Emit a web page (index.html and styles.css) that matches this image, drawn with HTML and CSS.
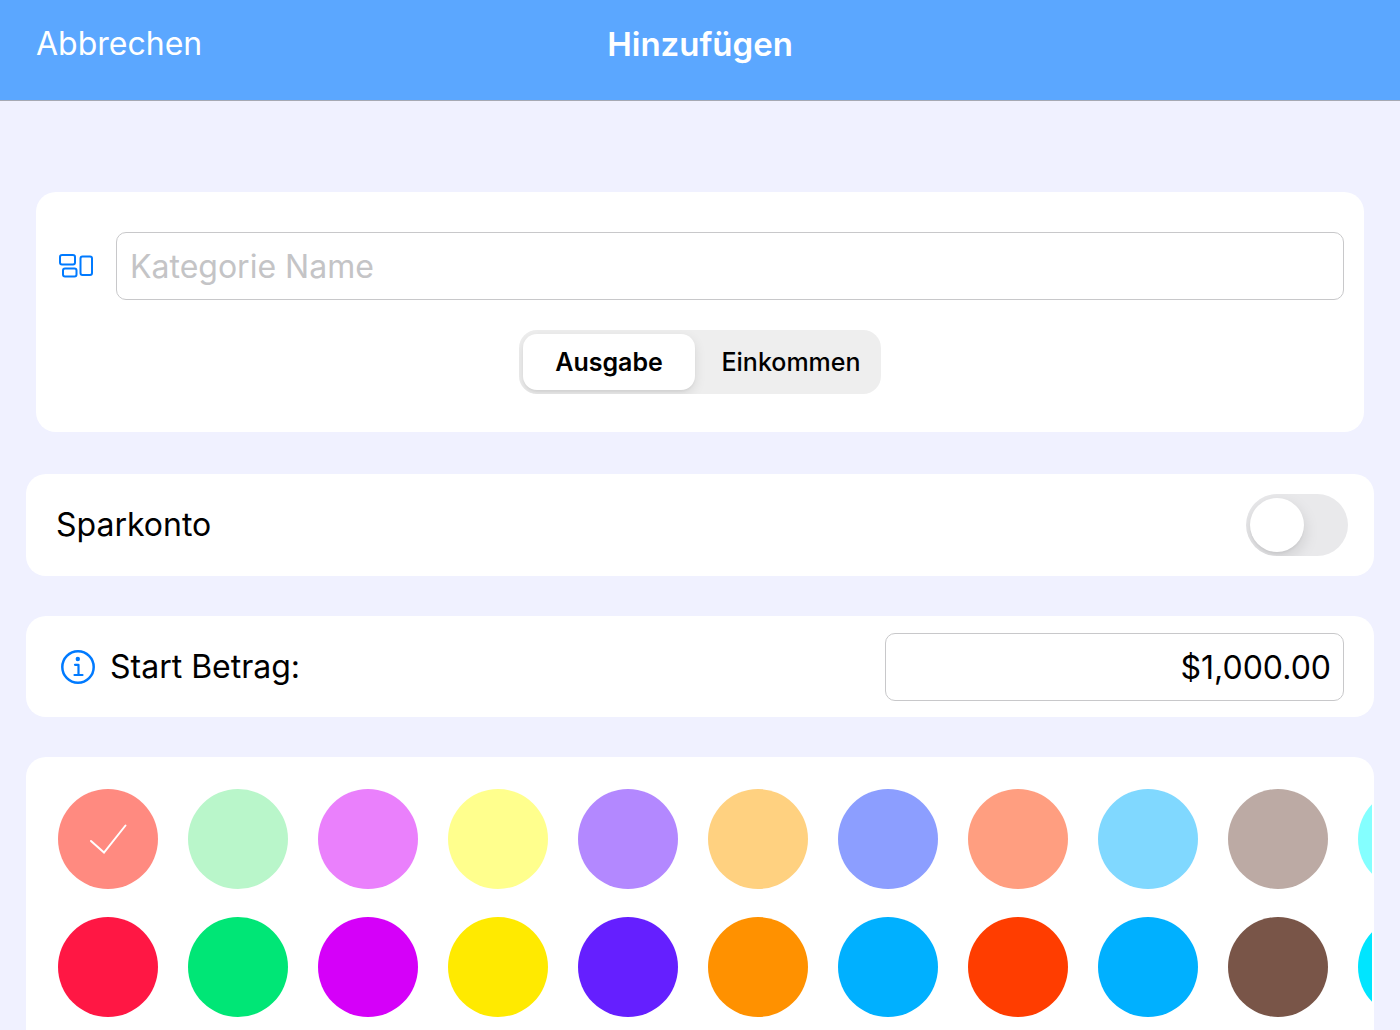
FILE: index.html
```html
<!DOCTYPE html>
<html lang="de">
<head>
<meta charset="utf-8">
<meta name="viewport" content="width=device-width, initial-scale=1">
<title>Hinzufügen</title>
<link rel="stylesheet" href="styles.css">
</head>
<body>
<header class="navbar">
  <button class="navbar-action" type="button">Abbrechen</button>
  <h1 class="navbar-title">Hinzufügen</h1>
</header>
<main class="form">
  <section class="card card-name">
    <div class="name-row">
      <label class="name-label" for="name" aria-label="Kategorie Name">
        <svg class="icon" width="36" height="36" viewBox="0 0 36 36" fill="none" stroke="#007aff" stroke-width="2">
          <rect x="2" y="7" width="15" height="9.500" rx="2"/>
          <rect x="5" y="20.500" width="13.500" height="8" rx="2"/>
          <rect x="22.500" y="8.500" width="11.500" height="18.500" rx="2"/>
        </svg>
      </label>
      <input class="field" id="name" type="text" placeholder="Kategorie Name">
    </div>
    <div class="segmented" role="radiogroup">
      <label class="segment"><input class="segment-input" type="radio" name="type" checked><span class="segment-text">Ausgabe</span></label>
      <label class="segment"><input class="segment-input" type="radio" name="type"><span class="segment-text">Einkommen</span></label>
    </div>
  </section>
  <section class="card card-savings">
    <label class="row-label" for="savings">Sparkonto</label>
    <input class="switch" id="savings" type="checkbox" role="switch">
  </section>
  <section class="card card-amount">
    <button class="info" type="button" aria-label="Info">
      <svg class="icon" width="36" height="36" viewBox="0 0 36 36" fill="none" stroke="#007aff">
        <circle cx="18" cy="18" r="15.700" stroke-width="2.500"/>
        <circle cx="17.800" cy="10" r="2.200" fill="#007aff" stroke="none"/>
        <path d="M15 15.800h3.500v10M14.500 26h8" stroke-width="2.200" stroke-linecap="round" stroke-linejoin="round"/>
      </svg>
    </button>
    <label class="row-label" for="amount">Start Betrag:</label>
    <input class="field field-amount" id="amount" type="text" inputmode="decimal" value="$1,000.00">
  </section>
  <section class="card card-colors">
    <div class="swatches" role="radiogroup" aria-label="Farbe">
      <label class="swatch" style="background:#ff8a80"><input class="swatch-input" type="radio" name="color" checked aria-label="#ff8a80"><svg class="check" width="40" height="32" viewBox="0 0 40 32" fill="none" stroke="#fff" stroke-width="2" stroke-linecap="round" stroke-linejoin="miter"><path d="M3 18L16 29.500L37.500 2.500"/></svg></label>
      <label class="swatch" style="background:#ff1744"><input class="swatch-input" type="radio" name="color" aria-label="#ff1744"></label>
      <label class="swatch" style="background:#b9f6ca"><input class="swatch-input" type="radio" name="color" aria-label="#b9f6ca"></label>
      <label class="swatch" style="background:#00e676"><input class="swatch-input" type="radio" name="color" aria-label="#00e676"></label>
      <label class="swatch" style="background:#ea80fc"><input class="swatch-input" type="radio" name="color" aria-label="#ea80fc"></label>
      <label class="swatch" style="background:#d500f9"><input class="swatch-input" type="radio" name="color" aria-label="#d500f9"></label>
      <label class="swatch" style="background:#ffff8d"><input class="swatch-input" type="radio" name="color" aria-label="#ffff8d"></label>
      <label class="swatch" style="background:#ffea00"><input class="swatch-input" type="radio" name="color" aria-label="#ffea00"></label>
      <label class="swatch" style="background:#b388ff"><input class="swatch-input" type="radio" name="color" aria-label="#b388ff"></label>
      <label class="swatch" style="background:#651fff"><input class="swatch-input" type="radio" name="color" aria-label="#651fff"></label>
      <label class="swatch" style="background:#ffd180"><input class="swatch-input" type="radio" name="color" aria-label="#ffd180"></label>
      <label class="swatch" style="background:#ff9100"><input class="swatch-input" type="radio" name="color" aria-label="#ff9100"></label>
      <label class="swatch" style="background:#8c9eff"><input class="swatch-input" type="radio" name="color" aria-label="#8c9eff"></label>
      <label class="swatch" style="background:#00b0ff"><input class="swatch-input" type="radio" name="color" aria-label="#00b0ff"></label>
      <label class="swatch" style="background:#ff9e80"><input class="swatch-input" type="radio" name="color" aria-label="#ff9e80"></label>
      <label class="swatch" style="background:#ff3d00"><input class="swatch-input" type="radio" name="color" aria-label="#ff3d00"></label>
      <label class="swatch" style="background:#80d8ff"><input class="swatch-input" type="radio" name="color" aria-label="#80d8ff"></label>
      <label class="swatch" style="background:#00b0ff"><input class="swatch-input" type="radio" name="color" aria-label="#00b0ff"></label>
      <label class="swatch" style="background:#bcaaa4"><input class="swatch-input" type="radio" name="color" aria-label="#bcaaa4"></label>
      <label class="swatch" style="background:#795548"><input class="swatch-input" type="radio" name="color" aria-label="#795548"></label>
      <label class="swatch" style="background:#84ffff"><input class="swatch-input" type="radio" name="color" aria-label="#84ffff"></label>
      <label class="swatch" style="background:#00e5ff"><input class="swatch-input" type="radio" name="color" aria-label="#00e5ff"></label>
    </div>
  </section>
</main>
</body>
</html>
```
FILE: styles.css
```css
* {
  box-sizing: border-box;
}

body {
  margin: 0;
  height: 100vh;
  display: flex;
  flex-direction: column;
  overflow: hidden;
  background: #f0f1ff;
  color: #000;
  font-family: Inter, "Liberation Sans", sans-serif;
  font-size: 32px;
  line-height: 40px;
}

button,
input {
  font: inherit;
  color: inherit;
  margin: 0;
}

.icon,
.check {
  display: block;
}

.navbar {
  flex: none;
  display: grid;
  grid-template-columns: 1fr auto 1fr;
  align-items: center;
  padding: 24px 36px 36px;
  background: #5ba7ff;
  border-bottom: 1px solid #a6a9b3;
  color: #fff;
}

.navbar-action {
  justify-self: start;
  padding: 0;
  border: 0;
  background: none;
}

.navbar-title {
  margin: 0;
  font-size: 33px;
  font-weight: 600;
}

.form {
  flex: 1;
  min-height: 0;
  overflow-y: auto;
  scrollbar-width: none;
  padding: 91px 26px 40px;
}

.card {
  display: flex;
  align-items: center;
  margin-bottom: 40px;
  border-radius: 20px;
  background: #fff;
}

.card-name {
  flex-direction: column;
  gap: 30px;
  margin: 0 10px 42px;
  padding: 40px 20px 38px;
}

.name-row {
  display: flex;
  align-items: center;
  gap: 22px;
  width: 100%;
  padding-left: 2px;
}

.field {
  flex: 1;
  min-width: 0;
  height: 68px;
  padding: 0 12px 0 13px;
  border: 1px solid #c8c8ca;
  border-radius: 10px;
  background: #fff;
  outline: 0;
}

.field::placeholder {
  color: #c4c4c6;
  opacity: 1;
}

.segmented {
  display: grid;
  grid-template-columns: 172px 172px;
  gap: 10px;
  padding: 4px;
  border-radius: 18px;
  background: #eee;
  overflow: hidden;
  font-size: 25px;
  line-height: 32px;
}

.segment {
  display: grid;
}

.segment-input,
.swatch-input {
  appearance: none;
  width: 0;
  height: 0;
}

.segment-input,
.segment-text {
  grid-area: 1 / 1;
}

.segment-text {
  padding: 12px 0;
  border-radius: 14px;
  text-align: center;
  font-weight: 500;
}

.segment-input:checked + .segment-text {
  background: #fff;
  box-shadow: 0 4px 12px rgba(0, 0, 0, 0.1), 0 2px 2px rgba(0, 0, 0, 0.04);
  font-weight: 600;
}

.card-savings {
  justify-content: space-between;
  padding: 20px 26px 20px 30px;
}

.switch {
  appearance: none;
  display: flex;
  width: 102px;
  height: 62px;
  padding: 4px;
  border-radius: 31px;
  background: #e9e9eb;
  overflow: hidden;
}

.switch::before {
  content: "";
  width: 54px;
  height: 54px;
  border-radius: 50%;
  background: #fff;
  box-shadow: 0 6px 16px rgba(0, 0, 0, 0.13), 0 2px 2px rgba(0, 0, 0, 0.04);
}

.switch:checked {
  justify-content: flex-end;
  background: #34c759;
}

.card-amount {
  padding: 17px 30px 16px 34px;
}

.info {
  margin-right: 14px;
  padding: 0;
  border: 0;
  background: none;
}

.field-amount {
  flex: 0 1 459px;
  margin-left: auto;
  text-align: right;
}

.card-colors {
  padding: 0 2px;
}

.swatches {
  display: grid;
  grid-auto-flow: column;
  grid-template-rows: 100px 100px;
  grid-auto-columns: 100px;
  gap: 28px 30px;
  width: 100%;
  padding: 32px 30px;
  overflow-x: auto;
  scrollbar-width: none;
}

.swatch {
  display: flex;
  align-items: center;
  justify-content: center;
  border-radius: 50%;
}
```
